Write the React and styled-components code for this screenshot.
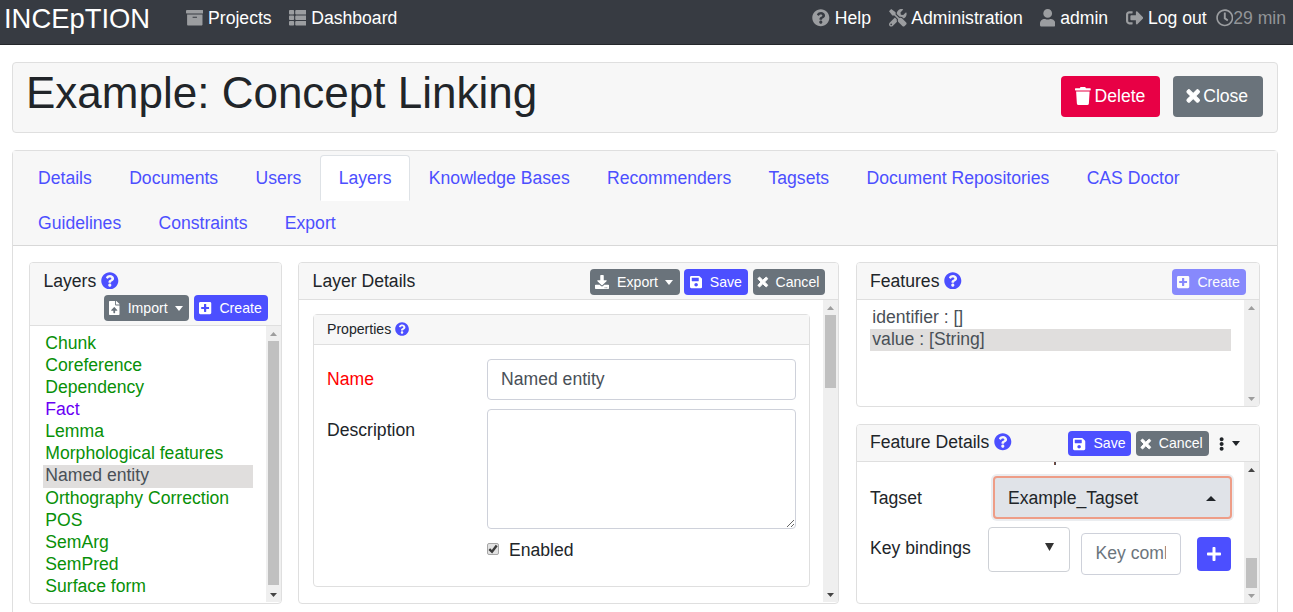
import React from "react";
import styled, { createGlobalStyle } from "styled-components";
import {
  FaArchive, FaThList, FaQuestionCircle, FaTools, FaUser, FaSignOutAlt, FaRegClock,
  FaTrash, FaTimes, FaFileUpload, FaPlusSquare, FaDownload, FaSave, FaPlus, FaEllipsisV,
} from "react-icons/fa";

const Global = createGlobalStyle`
  *, *::before, *::after { box-sizing: border-box; }
  html, body { margin: 0; height: 612px; overflow: hidden; background: #fff; }
  body { font: 17.6px/1.5 "Liberation Sans", Arial, sans-serif; color: #212529; }
  input, textarea, button { font: inherit; margin: 0; }
  svg { display: block; flex: none; }
`;

const BLUE = "#4c4fff";
const GRAY = "#6a737b";
const RED = "#e80045";
const LINE = "#dfdfdf";

const Page = styled.div`
  height: 612px;
  overflow: hidden;
`;

const Navbar = styled.nav`
  height: 45px;
  padding: 0 7px 0 4px;
  display: flex;
  align-items: flex-start;
  background: #373b42;
  border-bottom: 1px solid #24272b;
  color: #fff;
  white-space: nowrap;
`;

const Brand = styled.a`
  width: 181.7px;
  font-size: 27.4px;
  line-height: 38px;
`;

const NavItem = styled.a`
  display: flex;
  align-items: center;
  height: 36px;
  gap: ${(p) => p.$gap ?? 4.8}px;
  margin-right: ${(p) => p.$after ?? 0}px;
  color: ${(p) => (p.$muted ? "#929497" : "#fff")};
  svg { color: #9b9da0; }
`;

const Spring = styled.div`
  flex: 1;
`;

const TitleCard = styled.header`
  display: flex;
  align-items: flex-start;
  width: 1266px;
  height: 71px;
  margin: 17px 0 17px 12px;
  padding: 13px 14px 0 13px;
  background: #f7f7f7;
  border: 1px solid ${LINE};
  border-radius: 4px;
`;

const Title = styled.h1`
  flex: 1;
  margin: -9px 0 0;
  font-size: 44px;
  line-height: 52px;
  font-weight: 400;
`;

const BigButton = styled.button`
  display: flex;
  align-items: center;
  gap: 4px;
  width: ${(p) => p.$w}px;
  height: 41px;
  padding: 0 0 0 13.8px;
  margin-left: 13px;
  border: 0;
  border-radius: 4px;
  color: #fff;
  background: ${(p) => p.$bg};
  svg { margin-bottom: 2px; }
`;

/* Font Awesome glyphs narrower than their 1em box, trimmed to their own width */
const Cross = styled(FaTimes)`
  width: ${(p) => p.size * 0.6875}px;
  overflow: visible;
  stroke: currentColor;
  stroke-width: 34px;
`;
const Trash = styled(FaTrash)`
  width: ${(p) => p.size * 0.875}px;
`;
const User = styled(FaUser)`
  width: ${(p) => p.size * 0.875}px;
`;
const FileUp = styled(FaFileUpload)`
  width: ${(p) => p.size * 0.75}px;
`;
const PlusSquare = styled(FaPlusSquare)`
  width: ${(p) => p.size * 0.875}px;
`;
const Floppy = styled(FaSave)`
  width: ${(p) => p.size * 0.875}px;
`;
const Dots = styled(FaEllipsisV)`
  width: ${(p) => p.size * 0.375}px;
`;

const Main = styled.main`
  width: 1266px;
  height: 480px;
  margin-left: 12px;
  border: 1px solid ${LINE};
  border-radius: 4px 4px 0 0;
`;

const Tabs = styled.ul`
  display: flex;
  flex-wrap: wrap;
  height: 95px;
  margin: 0;
  padding: 4px 6px 0 6.4px;
  list-style: none;
  background: #f7f7f7;
  border-bottom: 1px solid #d8d8d8;
`;

const Tab = styled.li`
  height: 46px;
  margin-bottom: -1px;
  padding: 8.8px 17.67px;
  color: ${BLUE};
  border: 1px solid ${(p) => (p.$active ? "#dee2e6" : "transparent")};
  border-bottom-color: ${(p) => (p.$active ? "#fff" : "transparent")};
  border-radius: 4px 4px 0 0;
  background: ${(p) => (p.$active ? "#fff" : "transparent")};
`;

const Columns = styled.div`
  display: grid;
  grid-template-columns: 253px 541px 405px;
  column-gap: 16px;
  padding: 16px 0 0 16px;
`;

const Column = styled.div`
  display: flex;
  flex-direction: column;
  gap: 17px;
  &:last-child { margin-left: 1px; }
`;

const Card = styled.section`
  display: flex;
  flex-direction: column;
  height: ${(p) => p.$h}px;
  border: 1px solid ${LINE};
  border-radius: 4px;
  overflow: hidden;
  background: #fff;
`;

const CardHead = styled.header`
  flex: none;
  display: flex;
  flex-wrap: wrap;
  align-items: center;
  align-content: flex-start;
  height: ${(p) => p.$h ?? 37}px;
  padding: ${(p) => (p.$h ? 5 : 6)}px 13px 0;
  background: #f7f7f7;
  border-bottom: 1px solid ${LINE};
`;

const CardTitle = styled.h2`
  display: flex;
  align-items: center;
  gap: 5px;
  flex: ${(p) => (p.$full ? "0 0 100%" : "1")};
  margin: ${(p) => (p.$full ? 0 : "-2px")} 0 0;
  padding-left: ${(p) => p.$indent ?? 0}px;
  font-size: inherit;
  font-weight: 400;
  line-height: 27px;
  svg { color: ${BLUE}; margin-bottom: ${(p) => (p.$full ? 2 : 1)}px; }
`;

const ButtonGroup = styled.div`
  display: flex;
  gap: ${(p) => p.$gap ?? 4.4}px;
  margin-left: auto;
`;

const SmallButton = styled.button`
  display: flex;
  align-items: center;
  width: ${(p) => p.$w}px;
  height: ${(p) => p.$h ?? 26}px;
  padding: 0 0 0 5.4px;
  border: 0;
  border-radius: 4px;
  font-size: 14.1px;
  color: #fff;
  background: ${(p) => p.$bg ?? GRAY};
  opacity: ${(p) => (p.disabled ? 0.65 : 1)};
  span { margin: ${(p) => (p.$h ? 0 : 1.5)}px 0 0 7.8px; }
`;

const Caret = styled.i`
  flex: none;
  width: 0;
  height: 0;
  margin-left: ${(p) => p.$ml ?? 7.4}px;
  border: ${(p) => (p.$up ? 5 : 4.5)}px solid transparent;
  border-bottom-width: ${(p) => (p.$up ? "5px" : 0)};
  border-top-width: ${(p) => (p.$up ? 0 : "5px")};
  border-top-color: ${(p) => (p.$up ? "transparent" : "currentColor")};
  border-bottom-color: ${(p) => (p.$up ? "currentColor" : "transparent")};
`;

const CardBody = styled.div`
  flex: 1;
  min-height: 0;
  display: flex;
`;

const Content = styled.div`
  flex: 1;
  min-width: 0;
  overflow: hidden;
  padding: ${(p) => p.$pad ?? 0};
`;

const Track = styled.div`
  display: flex;
  flex-direction: column;
  align-items: center;
  width: 15px;
  margin-bottom: ${(p) => p.$mb ?? 1}px;
  background: #efefef;
`;

const Arrow = styled.div`
  display: flex;
  align-items: center;
  justify-content: center;
  height: 15px;
  color: ${(p) => (p.$on ? "#444" : "#9d9d9d")};
`;

const Groove = styled.div`
  flex: 1;
  width: 11px;
`;

const Thumb = styled.div`
  width: 11px;
  height: ${(p) => p.$h}px;
  margin-top: ${(p) => p.$top}px;
  background: #c0c0c0;
`;

function Scrollbar({ top = 0, size = 0, up, down, mb }) {
  return (
    <Track $mb={mb}>
      <Arrow $on={up}><svg width="7" height="4" viewBox="0 0 7 4"><path d="M0 4L3.5 0L7 4Z" fill="currentColor" /></svg></Arrow>
      <Groove><Thumb $h={size} $top={top} /></Groove>
      <Arrow $on={down}><svg width="7" height="4" viewBox="0 0 7 4"><path d="M0 0L3.5 4L7 0Z" fill="currentColor" /></svg></Arrow>
    </Track>
  );
}

const List = styled.ul`
  margin: 0;
  padding: 0;
  list-style: none;
`;

const Option = styled.li`
  height: ${(p) => p.$h ?? 22}px;
  padding-left: 2.3px;
  line-height: 20.5px;
  white-space: nowrap;
  color: ${(p) => (p.$selected ? "#495057" : p.$color ?? "#495057")};
  background: ${(p) => (p.$selected ? "#e0dedd" : "transparent")};
`;

const FieldCard = styled.div`
  height: 273px;
  border: 1px solid ${LINE};
  border-radius: 4px;
`;

const FieldHead = styled.div`
  display: flex;
  align-items: center;
  gap: 4px;
  height: 30px;
  padding: 0 13px;
  font-size: 14.1px;
  background: #f7f7f7;
  border-bottom: 1px solid ${LINE};
  svg { color: ${BLUE}; }
`;

const Field = styled.div`
  display: flex;
  padding: 0 13px;
  margin-top: ${(p) => p.$mt}px;
`;

const Label = styled.label`
  width: ${(p) => p.$w ?? 160}px;
  padding-top: ${(p) => p.$pt ?? 7}px;
  color: ${(p) => (p.$required ? "#ff0000" : "inherit")};
  white-space: nowrap;
`;

const Input = styled.input`
  flex: none;
  width: ${(p) => p.$w}px;
  height: ${(p) => p.$h ?? 41}px;
  padding: 0 13px;
  color: #495057;
  background: #fff;
  border: 1px solid #ced1da;
  border-radius: 4px;
  outline: 0;
  &::placeholder { color: #6c757d; opacity: 1; }
`;

const TextArea = styled.textarea`
  width: 309px;
  height: 120px;
  border: 1px solid #ced1da;
  border-radius: 4px;
  resize: vertical;
`;

const CheckRow = styled.label`
  display: flex;
  align-items: center;
  gap: 10px;
  margin: 8px 0 0 173px;
  height: 27px;
`;

const CheckBox = styled.span`
  display: flex;
  align-items: center;
  justify-content: center;
  width: 12px;
  height: 12px;
  margin-bottom: 3px;
  border: 1px solid #a6a6a6;
  border-radius: 2px;
  background: #e2e2e2;
`;

const ScrolledRowEdge = styled.div`
  width: 2px;
  height: 3px;
  margin-left: 184px;
  background: linear-gradient(90deg, #8f4f30, #3d4a63);
`;

const Tagset = styled.div`
  display: flex;
  align-items: center;
  justify-content: space-between;
  width: 239px;
  height: 43px;
  padding: 1px 14px 0 13px;
  border: 2px solid #ee9d87;
  border-radius: 4px;
  background: #e0e3e8;
  box-shadow: 0 0 0 2px #ebedf0;
`;

const KeySelect = styled.div`
  display: flex;
  align-items: center;
  justify-content: flex-end;
  width: 82px;
  height: 45px;
  padding: 0 15.5px 6px 0;
  border: 1px solid #ced1d6;
  border-radius: 4px;
`;

const KeyRow = styled.div`
  display: flex;
  align-items: flex-start;
  margin-top: ${(p) => p.$mt}px;
`;

const AddButton = styled.button`
  display: flex;
  align-items: center;
  justify-content: center;
  width: 34px;
  height: 34px;
  margin: 10px 0 0 16px;
  padding: 0;
  color: #fff;
  background: ${BLUE};
  border: 0;
  border-radius: 4px;
`;

const KeyInput = styled(Input)`
  margin: 6px 0 0 11px;
  padding: 0 14.5px 2px 13.5px;
`;

const MenuButton = styled.div`
  display: flex;
  align-items: center;
  width: 32px;
  padding-left: 5px;
`;

const TABS = ["Details", "Documents", "Users", "Layers", "Knowledge Bases", "Recommenders", "Tagsets",
  "Document Repositories", "CAS Doctor", "Guidelines", "Constraints", "Export"];

const LAYERS = ["Chunk", "Coreference", "Dependency", "Fact", "Lemma", "Morphological features",
  "Named entity", "Orthography Correction", "POS", "SemArg", "SemPred", "Surface form"];

const GREEN = "#089008";

export default function App() {
  return (
    <Page>
      <Global />
      <Navbar>
        <Brand>INCEpTION</Brand>
        <NavItem $after={17.2}><FaArchive />Projects</NavItem>
        <NavItem><FaThList />Dashboard</NavItem>
        <Spring />
        <NavItem $after={18}><FaQuestionCircle />Help</NavItem>
        <NavItem $after={17.2}><FaTools />Administration</NavItem>
        <NavItem $after={17.4}><User size={17.6} />admin</NavItem>
        <NavItem $after={9}><FaSignOutAlt />Log out</NavItem>
        <NavItem $muted $gap={0}><FaRegClock />29 min</NavItem>
      </Navbar>

      <TitleCard>
        <Title>Example: Concept Linking</Title>
        <BigButton $w={99} $bg={RED}><Trash size={18} />Delete</BigButton>
        <BigButton $w={90} $bg={GRAY}><Cross size={18} />Close</BigButton>
      </TitleCard>

      <Main>
        <Tabs>
          {TABS.map((t) => <Tab key={t} $active={t === "Layers"}>{t}</Tab>)}
        </Tabs>
        <Columns>
          <Column>
            <Card $h={342}>
              <CardHead $h={63}>
                <CardTitle $full $indent={0.4}>Layers <FaQuestionCircle /></CardTitle>
                <ButtonGroup $gap={5}>
                  <SmallButton $w={85}><FileUp size={14} /><span>Import</span><Caret /></SmallButton>
                  <SmallButton $w={74} $bg={BLUE}><PlusSquare size={14} /><span>Create</span></SmallButton>
                </ButtonGroup>
              </CardHead>
              <CardBody>
                <Content $pad="7px 13px 0">
                  <List>
                    {LAYERS.map((l) => (
                      <Option
                        key={l}
                        $selected={l === "Named entity"}
                        $h={l === "Named entity" ? 22.6 : 22}
                        $color={l === "Fact" ? "#6a00f4" : GREEN}
                      >
                        {l}
                      </Option>
                    ))}
                  </List>
                </Content>
                <Scrollbar size={244} down />
              </CardBody>
            </Card>
          </Column>

          <Column>
            <Card $h={342}>
              <CardHead>
                <CardTitle $indent={0.6}>Layer Details</CardTitle>
                <ButtonGroup>
                  <SmallButton $w={90}><FaDownload size={14} /><span>Export</span><Caret /></SmallButton>
                  <SmallButton $w={64} $bg={BLUE}><Floppy size={14} /><span>Save</span></SmallButton>
                  <SmallButton $w={72.3}><Cross size={14} /><span>Cancel</span></SmallButton>
                </ButtonGroup>
              </CardHead>
              <CardBody>
                <Content $pad="14px 13px 0 14px">
                  <FieldCard>
                    <FieldHead>Properties <FaQuestionCircle /></FieldHead>
                    <Field $mt={14}>
                      <Label $required>Name</Label>
                      <Input $w={309} defaultValue="Named entity" />
                    </Field>
                    <Field $mt={9}>
                      <Label $pt={8}>Description</Label>
                      <TextArea />
                    </Field>
                    <CheckRow>
                      <CheckBox><svg width="10" height="10" viewBox="0 0 10 10"><path d="M1.3 5.2L4 7.8L8.7 1.5" stroke="#3c3c3c" strokeWidth="2.4" fill="none" /></svg></CheckBox>
                      Enabled
                    </CheckRow>
                  </FieldCard>
                </Content>
                <Scrollbar size={73} down />
              </CardBody>
            </Card>
          </Column>

          <Column>
            <Card $h={145}>
              <CardHead>
                <CardTitle>Features <FaQuestionCircle /></CardTitle>
                <SmallButton $w={74} $bg={BLUE} disabled><PlusSquare size={14} /><span>Create</span></SmallButton>
              </CardHead>
              <CardBody>
                <Content $pad="7px 13px 0">
                  <List>
                    <Option>identifier : []</Option>
                    <Option $selected>value : [String]</Option>
                  </List>
                </Content>
                <Scrollbar mb={0} />
              </CardBody>
            </Card>
            <Card $h={180}>
              <CardHead>
                <CardTitle>Feature Details <FaQuestionCircle /></CardTitle>
                <ButtonGroup $gap={5}>
                  <SmallButton $w={63} $h={25} $bg={BLUE}><Floppy size={14} /><span>Save</span></SmallButton>
                  <SmallButton $w={73} $h={25}><Cross size={14} /><span>Cancel</span></SmallButton>
                  <MenuButton><Dots size={14} /><Caret $ml={7.5} /></MenuButton>
                </ButtonGroup>
              </CardHead>
              <CardBody>
                <Content $pad="0 8px 0 13px">
                  <ScrolledRowEdge />
                  <KeyRow $mt={11}>
                    <Label $w={123} $pt={9}>Tagset</Label>
                    <Tagset>Example_Tagset<Caret $up /></Tagset>
                  </KeyRow>
                  <KeyRow $mt={8}>
                    <Label $w={118} $pt={8}>Key bindings</Label>
                    <KeySelect><svg width="9" height="8" viewBox="0 0 9 8"><path d="M0 0H9L4.5 8Z" fill="#333" /></svg></KeySelect>
                    <KeyInput $w={100} $h={42} placeholder="Key combo" />
                    <AddButton><FaPlus size={16} /></AddButton>
                  </KeyRow>
                </Content>
                <Scrollbar top={81} size={30} up mb={0} />
              </CardBody>
            </Card>
          </Column>
        </Columns>
      </Main>
    </Page>
  );
}
